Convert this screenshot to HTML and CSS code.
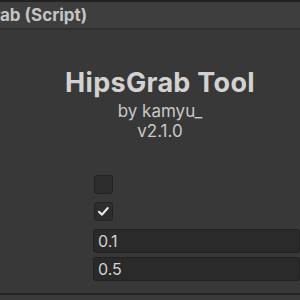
FILE: index.html
```html
<!DOCTYPE html>
<html lang="en">
<head>
    <meta charset="UTF-8">
    <title>HipsGrab (Script)</title>
    <link rel="stylesheet" href="styles.css">
</head>
<body>
    <div class="inspector">
        <div class="header">
            <span class="header-title">HipsGrab (Script)</span>
        </div>

        <div class="content">
            <div class="about">
                <h1 class="tool-name">HipsGrab Tool</h1>
                <p class="author">by kamyu_</p>
                <p class="version">v2.1.0</p>
            </div>

            <div class="fields">
                <div class="row toggle-row">
                    <span class="toggle"></span>
                </div>
                <div class="row toggle-row">
                    <span class="toggle on">
                        <svg viewBox="0 0 19 19">
                            <path d="M5 9.8 L8 12.6 L13.6 6.2" fill="none" stroke="#e8e8e8" stroke-width="2.2" stroke-linecap="round" stroke-linejoin="round"/>
                        </svg>
                    </span>
                </div>
                <div class="row field-row first">
                    <div class="number-field">0.1</div>
                </div>
                <div class="row field-row">
                    <div class="number-field">0.5</div>
                </div>
            </div>
        </div>

        <div class="footer"></div>
    </div>
</body>
</html>
```

FILE: styles.css
```css
* {
    margin: 0;
    padding: 0;
    box-sizing: border-box;
}

body {
    width: 300px;
    height: 300px;
    overflow: hidden;
    background-color: #383838;
    font-family: "Inter", "Liberation Sans", sans-serif;
    color: #c8c8c8;
}

.inspector {
    display: flex;
    flex-direction: column;
    height: 300px;
}

/* 상단 컴포넌트 헤더 */
.header {
    height: 30px;
    flex-shrink: 0;
    background-color: #3e3e3e;
    border-top: 2px solid #232323;
    border-bottom: 2px solid #2f2f2f;
    display: flex;
    align-items: center;
    overflow: hidden;
}

.header-title {
    flex-shrink: 0;
    margin-left: -57px;
    font-size: 17px;
    font-weight: 700;
    color: #c4c4c4;
    white-space: nowrap;
}

.content {
    padding-top: 37px;
}

.about {
    padding-left: 20px;
    text-align: center;
}

.tool-name {
    font-size: 27px;
    font-weight: 700;
    line-height: 32px;
    letter-spacing: 0.3px;
    color: #d2d2d2;
}

.author,
.version {
    font-size: 17px;
    line-height: 20px;
}

.author {
    margin-top: 2px;
}

.fields {
    margin-top: 32px;
    padding-left: 93px;
    display: flex;
    flex-direction: column;
    gap: 4px;
}

.row {
    display: flex;
    align-items: center;
}

.toggle-row {
    height: 23px;
}

.field-row {
    height: 24px;
}

.field-row.first {
    margin-top: 2px;
}

.toggle {
    width: 19px;
    height: 19px;
    margin-left: 1px;
    border-radius: 3px;
    background-color: #2d2d2d;
    border: 1px solid #232323;
    display: flex;
}

.toggle svg {
    width: 19px;
    height: 19px;
    margin: -1px;
}

.number-field {
    width: 230px;
    height: 24px;
    border-radius: 3px;
    background-color: #2a2a2a;
    border: 1px solid #212121;
    padding-left: 4px;
    font-size: 16px;
    line-height: 22px;
    color: #d2d2d2;
}

.footer {
    height: 7px;
    margin-top: auto;
    background-color: #3a3a3a;
    border-top: 2px solid #242424;
}
```
